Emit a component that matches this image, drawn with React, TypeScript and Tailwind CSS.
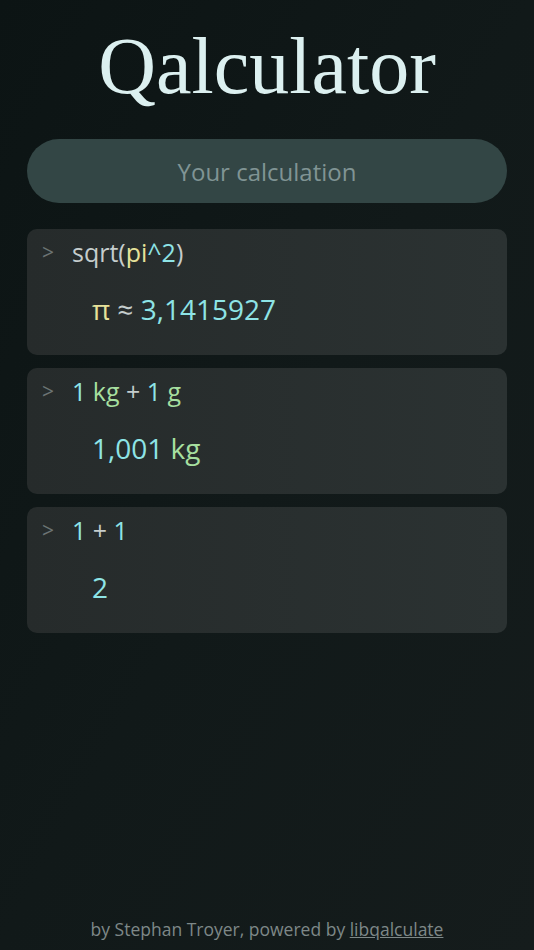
import React, { useState } from 'react';

type Token = { text: string; kind: 'fn' | 'var' | 'num' | 'unit' | 'op' };

interface Entry {
  input: Token[];
  result: Token[];
}

const colorFor: Record<Token['kind'], string> = {
  fn: 'text-[#c5cdcd]',
  var: 'text-[#e6e29a]',
  num: 'text-[#8ee4e6]',
  unit: 'text-[#a6df9f]',
  op: 'text-[#c5cdcd]',
};

const history: Entry[] = [
  {
    input: [
      { text: 'sqrt(', kind: 'fn' },
      { text: 'pi', kind: 'var' },
      { text: '^2', kind: 'num' },
      { text: ')', kind: 'fn' },
    ],
    result: [
      { text: 'π', kind: 'var' },
      { text: ' ≈ ', kind: 'op' },
      { text: '3,1415927', kind: 'num' },
    ],
  },
  {
    input: [
      { text: '1', kind: 'num' },
      { text: ' kg', kind: 'unit' },
      { text: ' + ', kind: 'op' },
      { text: '1', kind: 'num' },
      { text: ' g', kind: 'unit' },
    ],
    result: [
      { text: '1,001', kind: 'num' },
      { text: ' kg', kind: 'unit' },
    ],
  },
  {
    input: [
      { text: '1', kind: 'num' },
      { text: ' + ', kind: 'op' },
      { text: '1', kind: 'num' },
    ],
    result: [{ text: '2', kind: 'num' }],
  },
];

const Tokens: React.FC<{ tokens: Token[] }> = ({ tokens }) => (
  <>
    {tokens.map((t, i) => (
      <span key={i} className={`${colorFor[t.kind]} whitespace-pre`}>
        {t.text}
      </span>
    ))}
  </>
);

export default function App() {
  const [value, setValue] = useState('');

  return (
    <div className="min-h-[950px] flex flex-col bg-gradient-to-br from-[#0c1414] via-[#111919] to-[#151c1c] font-['Open_Sans','Noto_Sans',sans-serif]">
      <h1 className="pt-[24px] text-center text-[80px] leading-[84px] text-[#dcf0f0] font-['Liberation_Serif','DejaVu_Serif',serif]">
        Qalculator
      </h1>

      <main className="flex-1 px-[27px] pt-[31px] flex flex-col">
        <input
          value={value}
          onChange={(e) => setValue(e.target.value)}
          placeholder="Your calculation"
          className="h-[64px] w-full rounded-full bg-[#334645] text-center text-[24px] text-[#c5d4d4] placeholder:text-[#809494] outline-none"
        />

        <div className="mt-[26px] flex flex-col gap-[13px]">
          {history.map((entry, i) => (
            <div
              key={i}
              className="h-[126px] rounded-[10px] bg-gradient-to-r from-[#262b2b] to-[#2b3232] pl-[15px] pt-[6px]"
            >
              <div className="flex items-center text-[25px] leading-[34px]">
                <span className="w-[30px] text-[#6c7474] text-[21px]">&gt;</span>
                <Tokens tokens={entry.input} />
              </div>
              <div className="mt-[21px] pl-[50px] text-[28px] leading-[38px]">
                <Tokens tokens={entry.result} />
              </div>
            </div>
          ))}
        </div>
      </main>

      <footer className="pb-[8px] text-center text-[17.5px] leading-[26px] text-[#7e8888]">
        by Stephan Troyer, powered by{' '}
        <a href="#" className="underline">
          libqalculate
        </a>
      </footer>
    </div>
  );
}
